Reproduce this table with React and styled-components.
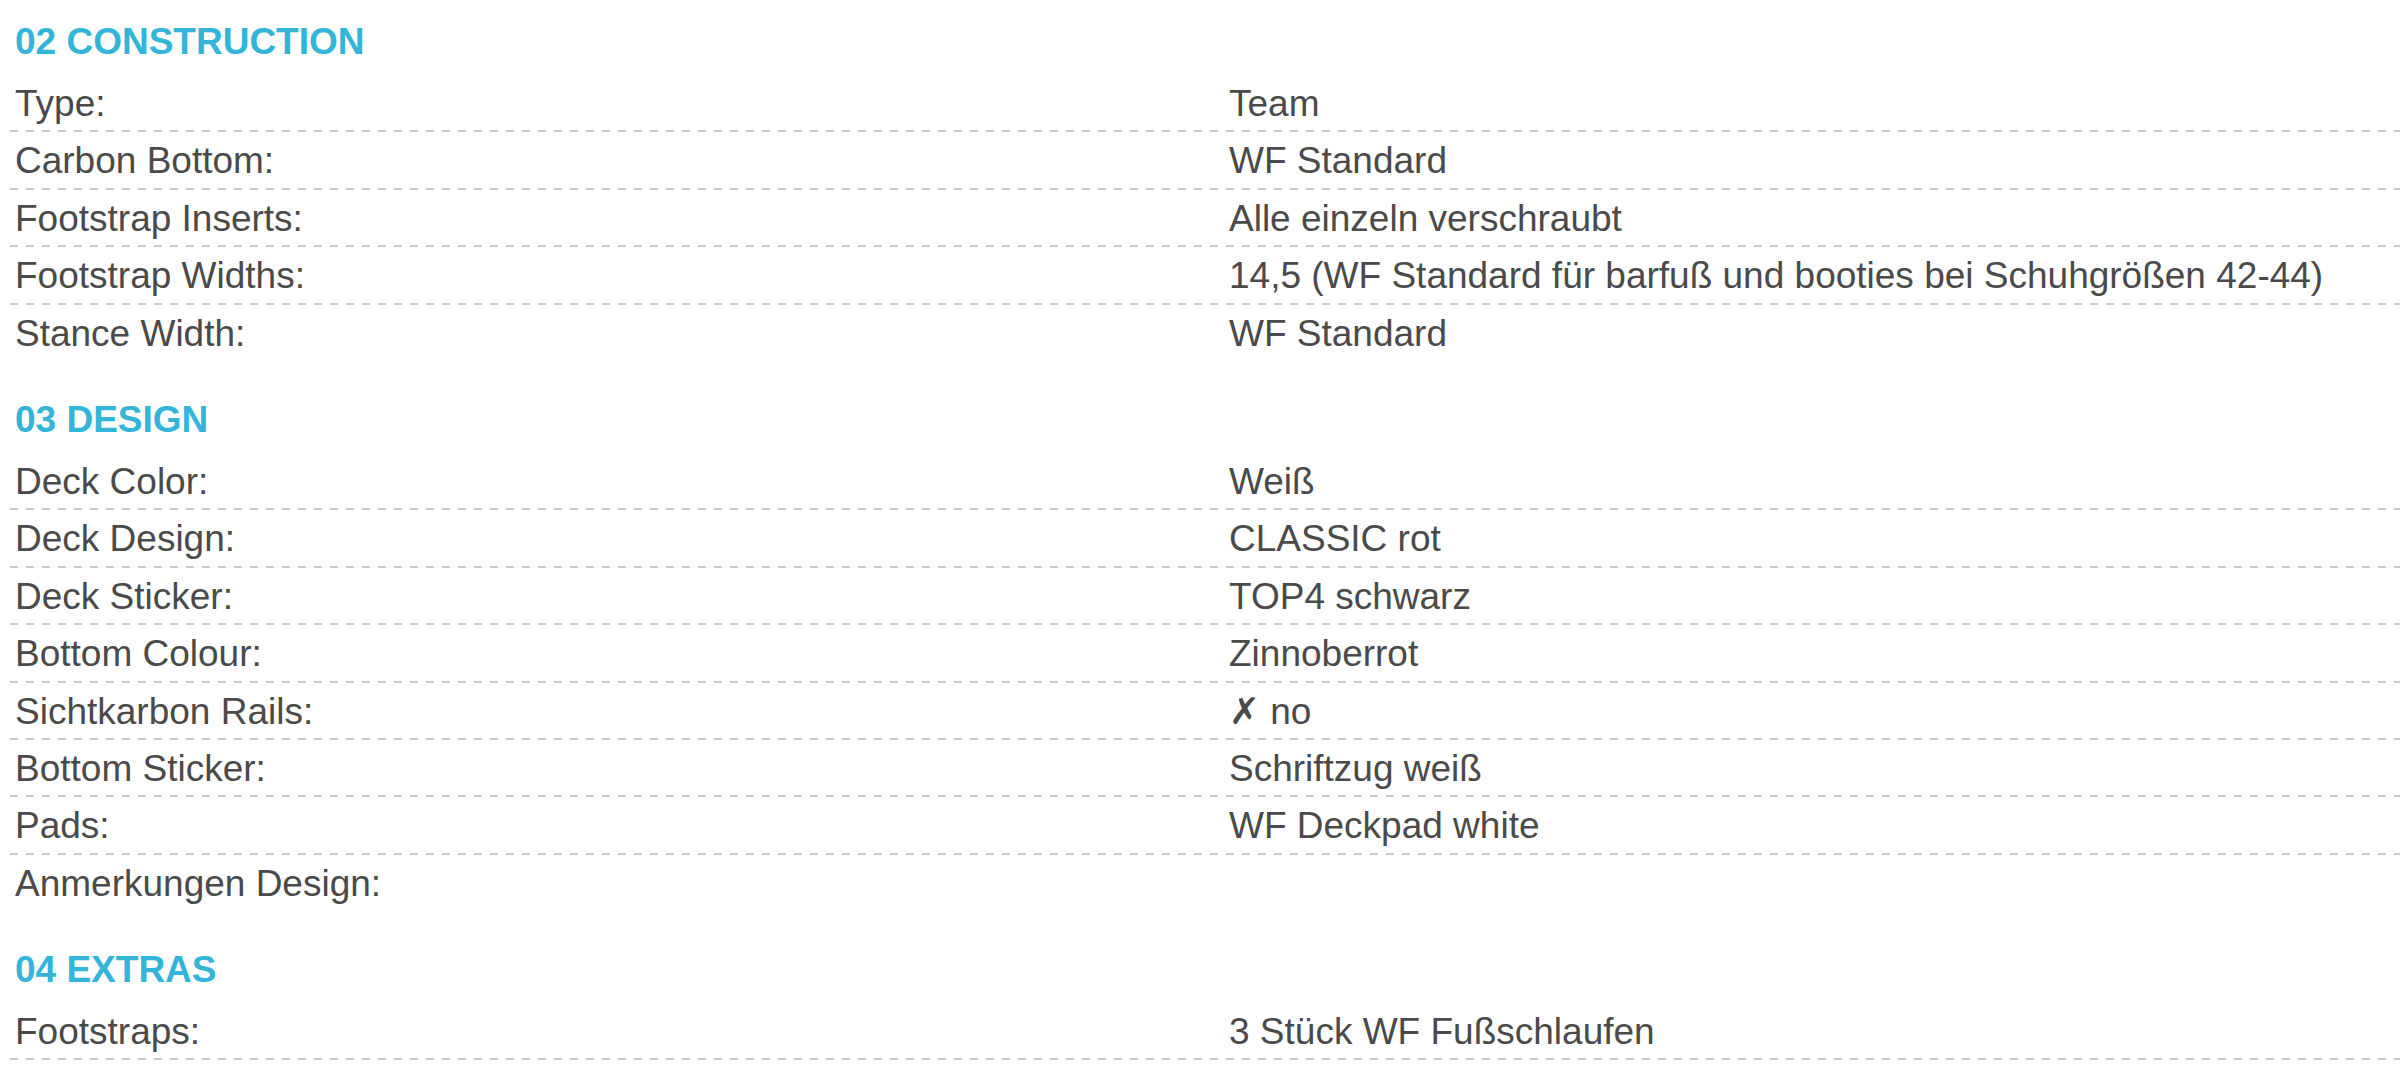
import React from "react";
import styled, { createGlobalStyle } from "styled-components";

const GlobalStyle = createGlobalStyle`
  body {
    margin: 0;
    background: #fff;
    font-family: "Liberation Sans", Arial, Helvetica, sans-serif;
  }
`;

const Page = styled.div`
  padding: 20px 0 0 10px;
`;

const Section = styled.section`
  & + & {
    margin-top: 36px;
  }
`;

const Heading = styled.h3`
  margin: 0 0 12px 5px;
  font-size: 37px;
  line-height: 43px;
  font-weight: 700;
  color: #33b5d9;
`;

const List = styled.div`
  display: flex;
  flex-direction: column;
`;

const Row = styled.div`
  display: grid;
  grid-template-columns: 1214px 1fr;
  padding: 7px 5px 7.4px;
  font-size: 37px;
  line-height: 43px;
  color: #4a4a4a;
  background-image: ${({ $line }) =>
    $line ? "linear-gradient(to right, #cbcbcb 52%, transparent 52%)" : "none"};
  background-size: 16px 2px;
  background-repeat: repeat-x;
  background-position: 0 100%;
  white-space: nowrap;
`;

const Label = styled.span``;

const Value = styled.span``;

const sections = [
  {
    title: "02 CONSTRUCTION",
    rows: [
      ["Type:", "Team"],
      ["Carbon Bottom:", "WF Standard"],
      ["Footstrap Inserts:", "Alle einzeln verschraubt"],
      ["Footstrap Widths:", "14,5 (WF Standard für barfuß und booties bei Schuhgrößen 42-44)"],
      ["Stance Width:", "WF Standard"],
    ],
  },
  {
    title: "03 DESIGN",
    rows: [
      ["Deck Color:", "Weiß"],
      ["Deck Design:", "CLASSIC rot"],
      ["Deck Sticker:", "TOP4 schwarz"],
      ["Bottom Colour:", "Zinnoberrot"],
      ["Sichtkarbon Rails:", "✗ no"],
      ["Bottom Sticker:", "Schriftzug weiß"],
      ["Pads:", "WF Deckpad white"],
      ["Anmerkungen Design:", ""],
    ],
  },
  {
    title: "04 EXTRAS",
    open: true,
    rows: [["Footstraps:", "3 Stück WF Fußschlaufen"]],
  },
];

export default function App() {
  return (
    <Page>
      <GlobalStyle />
      {sections.map((s) => (
        <Section key={s.title}>
          <Heading>{s.title}</Heading>
          <List>
            {s.rows.map(([label, value], i) => (
              <Row key={label} $line={s.open || i < s.rows.length - 1}>
                <Label>{label}</Label>
                <Value>{value}</Value>
              </Row>
            ))}
          </List>
        </Section>
      ))}
    </Page>
  );
}
